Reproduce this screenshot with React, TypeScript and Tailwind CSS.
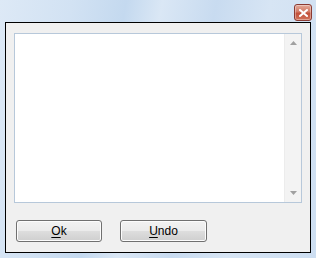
const App = () => {
  return (
    <div className="w-[316px] h-[258px] overflow-hidden bg-[linear-gradient(100deg,#dde9f6_0%,#d2e2f3_20%,#c4d9ef_35%,#dae7f5_45%,#c8dbf0_60%,#d7e5f4_75%,#cddef1_100%)] px-[5px] pb-[5px] flex flex-col font-['Liberation_Sans',sans-serif]">
      <div className="h-[22px] flex justify-end items-start pt-[4px] -mr-[1px]">
        <button className="w-[18px] h-[17px] rounded-[3px] border border-[#8a3a32] bg-[linear-gradient(#e3a999_0%,#d27a66_45%,#c2503a_55%,#d0725a_100%)] flex items-center justify-center shadow-[inset_0_0_0_1px_rgba(255,255,255,0.35)]">
          <svg width="9" height="8" viewBox="0 0 9 8">
            <path d="M1 1 L8 7 M8 1 L1 7" stroke="#fff" strokeWidth="2" strokeLinecap="square" />
          </svg>
        </button>
      </div>
      <div className="flex-1 border border-black bg-[#f0f0f0] pt-[10px] px-[8px] flex flex-col">
        <div className="h-[170px] w-[288px] border border-[#b7c8da] bg-white flex justify-end">
          <div className="w-[17px] bg-[#f3f3f3] border-l border-[#ececec] flex flex-col justify-between items-center py-[7px]">
            <svg width="7" height="4" viewBox="0 0 7 4">
              <path d="M3.5 0 L7 4 L0 4 Z" fill="#a0a0a0" />
            </svg>
            <svg width="7" height="4" viewBox="0 0 7 4">
              <path d="M0 0 L7 0 L3.5 4 Z" fill="#a0a0a0" />
            </svg>
          </div>
        </div>
        <div className="flex gap-[18px] mt-[17px] pl-[2px]">
          <button className="w-[86px] h-[22px] rounded-[3px] border border-[#707070] bg-[linear-gradient(#f2f2f2_0%,#ebebeb_48%,#dddddd_52%,#cfcfcf_100%)] text-[12px] text-black shadow-[inset_0_0_0_1px_#fcfcfc]">
            <span className="underline underline-offset-2">O</span>k
          </button>
          <button className="w-[87px] h-[22px] rounded-[3px] border border-[#707070] bg-[linear-gradient(#f2f2f2_0%,#ebebeb_48%,#dddddd_52%,#cfcfcf_100%)] text-[12px] text-black shadow-[inset_0_0_0_1px_#fcfcfc]">
            <span className="underline underline-offset-2">U</span>ndo
          </button>
        </div>
      </div>
    </div>
  );
};

export default App;
